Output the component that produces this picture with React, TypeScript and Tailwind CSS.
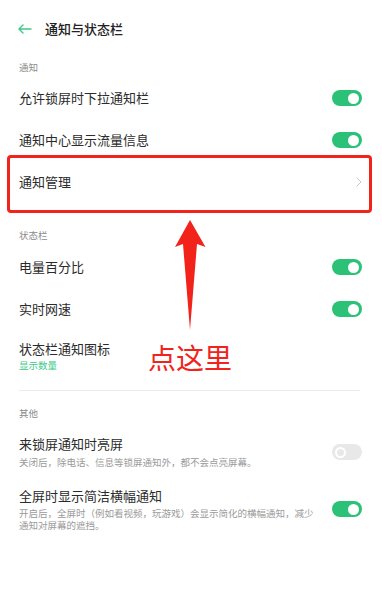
import React from "react";

function Toggle({ on }: { on: boolean }) {
  return on ? (
    <div className="w-[30px] h-[16px] rounded-full bg-[#2bc277] flex items-center justify-end pr-[3px] shrink-0">
      <div className="w-[11px] h-[11px] rounded-full bg-white" />
    </div>
  ) : (
    <div className="w-[30px] h-[16px] rounded-full bg-[#e8e8e8] flex items-center justify-start pl-[3px] shrink-0">
      <div className="w-[11px] h-[11px] rounded-full border-[2px] border-white" />
    </div>
  );
}

function Label({ text, h }: { text: string; h: string }) {
  return (
    <div className={`${h} flex items-center px-[19px] text-[9.5px] text-[#8c8c8c]`}>{text}</div>
  );
}

function Row({ text, on }: { text: string; on: boolean }) {
  return (
    <div className="h-[42px] flex items-center justify-between pl-[19px] pr-[20px]">
      <span className="text-[13px] text-[#2b2b2b]">{text}</span>
      <Toggle on={on} />
    </div>
  );
}

export default function App() {
  return (
    <div
      className="relative w-[382px] h-[600px] bg-white overflow-hidden"
      style={{ fontFamily: '"Noto Sans CJK SC", "Noto Sans", sans-serif' }}
    >
      <div className="h-[58px] flex items-center pl-[18px]">
        <svg width="14" height="10" viewBox="0 0 14 10" fill="none" stroke="#3cc98a" strokeWidth="1.4" strokeLinecap="round" strokeLinejoin="round">
          <path d="M13 5H1.5M5 1L1 5l4 4" />
        </svg>
        <span className="ml-[13px] text-[13px] font-medium text-[#222]">通知与状态栏</span>
      </div>
      <Label text="通知" h="h-[19px]" />
      <Row text="允许锁屏时下拉通知栏" on />
      <Row text="通知中心显示流量信息" on />
      <div className="h-[42px] flex items-center justify-between pl-[19px] pr-[20px]">
        <span className="text-[13px] text-[#2b2b2b]">通知管理</span>
        <svg width="6" height="10" viewBox="0 0 6 10" fill="none" stroke="#c8c8c8" strokeWidth="1" strokeLinecap="round" strokeLinejoin="round">
          <path d="M1 1l4 4-4 4" />
        </svg>
      </div>
      <div className="h-[23px]" />
      <Label text="状态栏" h="h-[19px]" />
      <div className="h-[1px]" />
      <Row text="电量百分比" on />
      <Row text="实时网速" on />
      <div className="h-[50px] flex flex-col justify-center pl-[19px] pt-[2px]">
        <span className="text-[13px] leading-[18px] text-[#2b2b2b]">状态栏通知图标</span>
        <span className="text-[9.5px] leading-[14px] text-[#3cc98a]">显示数量</span>
      </div>
      <div className="h-[10px]" />
      <div className="mx-[19px] w-[341px] h-px bg-[#ececec]" />
      <div className="h-[13px]" />
      <Label text="其他" h="h-[19px]" />
      <div className="mt-[12px] flex items-center justify-between pl-[19px] pr-[20px]">
        <div className="flex flex-col">
          <span className="text-[13px] leading-[18px] text-[#2b2b2b]">来锁屏通知时亮屏</span>
          <span className="mt-[2px] text-[9.5px] leading-[14px] text-[#9a9a9a]">关闭后，除电话、信息等锁屏通知外，都不会点亮屏幕。</span>
        </div>
        <Toggle on={false} />
      </div>
      <div className="mt-[18px] flex items-center justify-between pl-[19px] pr-[20px]">
        <div className="flex flex-col w-[300px]">
          <span className="text-[13px] leading-[18px] text-[#2b2b2b]">全屏时显示简洁横幅通知</span>
          <span className="text-[9.5px] leading-[12px] text-[#9a9a9a] mt-[2px]">
            开启后，全屏时（例如看视频，玩游戏）会显示简化的横幅通知，减少通知对屏幕的遮挡。
          </span>
        </div>
        <Toggle on />
      </div>

      {/* annotation overlays */}
      <div className="absolute left-[7px] top-[155px] w-[365px] h-[58px] border-[3px] border-[#f2231b] rounded-[4px]" />
      <svg className="absolute left-[175px] top-[219px]" width="31" height="112" viewBox="0 0 31 112">
        <path d="M15 1L30.5 28L22 25L15 111L8 25L0 28Z" fill="#f2231b" />
      </svg>
      <div className="absolute left-[148px] top-[337px] text-[28px] leading-[40px] text-[#f2231b]">点这里</div>
    </div>
  );
}
